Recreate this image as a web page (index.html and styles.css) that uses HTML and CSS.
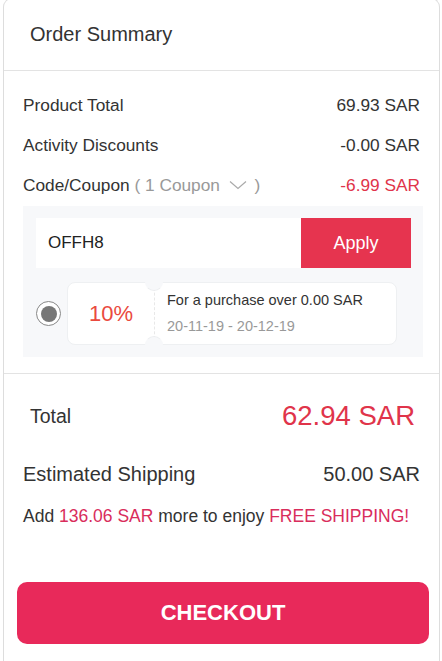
FILE: index.html
```html
<!DOCTYPE html>
<html lang="en">
<head>
    <meta charset="UTF-8">
    <meta name="viewport" content="width=device-width, initial-scale=1.0">
    <title>Order Summary</title>
    <link rel="stylesheet" href="styles.css">
</head>
<body>
    <div class="summary">
        <div class="summary-head">Order Summary</div>

        <div class="summary-body">
            <div class="row">
                <span>Product Total</span>
                <span>69.93 SAR</span>
            </div>
            <div class="row">
                <span>Activity Discounts</span>
                <span>-0.00 SAR</span>
            </div>
            <div class="row">
                <span>Code/Coupon <span class="muted">( 1 Coupon
                    <svg class="chevron" width="18" height="10" viewBox="0 0 18 10"><path d="M1 1.5 L9 8.5 L17 1.5" fill="none" stroke="#aaa" stroke-width="1.2"/></svg>
                    )</span></span>
                <span class="red">-6.99 SAR</span>
            </div>

            <div class="coupon-box">
                <div class="code-form">
                    <input class="code-input" type="text" value="OFFH8">
                    <button class="apply-btn">Apply</button>
                </div>
                <div class="coupon-item">
                    <span class="radio"><span class="radio-dot"></span></span>
                    <div class="ticket">
                        <div class="ticket-value">10%</div>
                        <div class="ticket-info">
                            <div class="ticket-rule">For a purchase over 0.00 SAR</div>
                            <div class="ticket-date">20-11-19 - 20-12-19</div>
                        </div>
                    </div>
                </div>
            </div>
        </div>

        <div class="summary-foot">
            <div class="total-row">
                <span>Total</span>
                <span class="total-value">62.94 SAR</span>
            </div>
            <div class="row ship-row">
                <span>Estimated Shipping</span>
                <span>50.00 SAR</span>
            </div>
            <div class="free-note">
                Add <span class="pink">136.06 SAR</span> more to enjoy <span class="pink">FREE SHIPPING!</span>
            </div>
            <button class="checkout-btn">CHECKOUT</button>
        </div>
    </div>
</body>
</html>
```

FILE: styles.css
```css
body {
    margin: 0;
    font-family: "Liberation Sans", Arial, sans-serif;
    color: #333;
    background: #fff;
}
.summary {
    margin: -2px 0 0 3px;
    width: 435px;
    border: 1px solid #ddd;
    border-bottom: none;
    border-radius: 9px 9px 0 0;
    padding-bottom: 30px;
}
.summary-head {
    height: 71px;
    line-height: 70px;
    padding-left: 26px;
    font-size: 20px;
    border-bottom: 1px solid #e3e3e3;
}
.summary-body {
    padding: 14px 16px 16px 19px;
    border-bottom: 1px solid #e3e3e3;
}
.row {
    display: flex;
    justify-content: space-between;
    align-items: center;
    height: 40px;
    font-size: 17.3px;
    padding-right: 3px;
}
.muted {
    color: #999;
}
.chevron {
    vertical-align: 1px;
    margin: 0 3px 0 4px;
}
.red {
    color: #e0344a;
}
.coupon-box {
    margin-top: 1px;
    background: #f7f8fa;
    padding: 12px 12px 12px 13px;
}
.code-form {
    display: flex;
    height: 50px;
}
.code-input {
    flex: 1;
    min-width: 0;
    border: none;
    outline: none;
    background: #fff;
    padding: 0 12px;
    font-family: inherit;
    font-size: 17px;
    color: #222;
}
.apply-btn {
    width: 110px;
    border: none;
    background: #e6344f;
    color: #fff;
    font-family: inherit;
    font-size: 18px;
}
.coupon-item {
    display: flex;
    align-items: center;
    gap: 6px;
    margin-top: 14px;
}
.radio {
    width: 23px;
    height: 23px;
    border: 1.3px solid #888;
    border-radius: 50%;
    display: flex;
    align-items: center;
    justify-content: center;
    background: #fff;
}
.radio-dot {
    width: 16px;
    height: 16px;
    border-radius: 50%;
    background: #777;
}
.ticket {
    width: 328px;
    height: 61px;
    display: flex;
    background: #fff;
    border: 1px solid #eef0f2;
    border-radius: 8px;
}
.ticket-value {
    width: 86px;
    display: flex;
    align-items: center;
    justify-content: center;
    font-size: 22px;
    color: #ea4a3e;
    border-right: 1px dashed #e8e8e8;
    position: relative;
}
.ticket-value::before,
.ticket-value::after {
    content: "";
    position: absolute;
    right: -9px;
    width: 16px;
    height: 16px;
    border-radius: 50%;
    background: #f7f8fa;
    border: 1px solid transparent;
}
.ticket-value::before {
    top: -10px;
    border-bottom-color: #eceef0;
}
.ticket-value::after {
    bottom: -10px;
    border-top-color: #eceef0;
}
.ticket-info {
    padding: 9px 0 0 12px;
    font-size: 14.5px;
}
.ticket-rule {
    color: #333;
}
.ticket-date {
    margin-top: 10px;
    color: #999;
}
.summary-foot {
    padding: 0 16px 0 19px;
}
.total-row {
    display: flex;
    justify-content: space-between;
    align-items: center;
    height: 84px;
    padding: 0 8px 0 7px;
    font-size: 19.5px;
}
.total-value {
    font-size: 27.5px;
    color: #e0344a;
}
.ship-row {
    font-size: 20px;
    height: 32px;
}
.free-note {
    margin-top: 15px;
    font-size: 17.5px;
    line-height: 22px;
}
.pink {
    color: #d92d5c;
}
.checkout-btn {
    display: block;
    margin: 55px 0 0 -6px;
    width: 412px;
    height: 62px;
    border: none;
    border-radius: 10px;
    background: #e8295a;
    color: #fff;
    font-family: inherit;
    font-size: 22px;
    font-weight: bold;
}
```
